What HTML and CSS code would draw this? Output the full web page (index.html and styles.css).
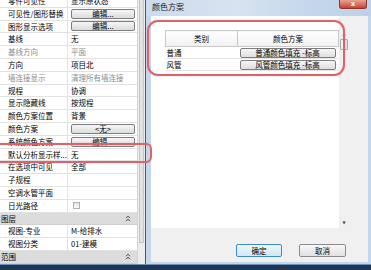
FILE: index.html
```html
<!DOCTYPE html>
<html lang="zh-CN">
<head>
<meta charset="UTF-8" />
<meta name="viewport" content="width=device-width, initial-scale=1" />
<title>颜色方案</title>
<link rel="stylesheet" href="styles.css">
</head>
<body>

<div class="screen">
  <div class="props">
    <div class="grid">
      <div class="row"><span class="key">零件可见性</span><span class="val">显示原状态</span></div>
      <div class="row"><span class="key">可见性/图形替换</span><span class="val"><span class="ebtn">编辑...</span></span></div>
      <div class="row"><span class="key">图形显示选项</span><span class="val"><span class="ebtn">编辑...</span></span></div>
      <div class="row"><span class="key">基线</span><span class="val">无</span></div>
      <div class="row off"><span class="key">基线方向</span><span class="val">平面</span></div>
      <div class="row"><span class="key">方向</span><span class="val">项目北</span></div>
      <div class="row off"><span class="key">墙连接显示</span><span class="val">清理所有墙连接</span></div>
      <div class="row"><span class="key">规程</span><span class="val">协调</span></div>
      <div class="row"><span class="key">显示隐藏线</span><span class="val">按规程</span></div>
      <div class="row"><span class="key">颜色方案位置</span><span class="val">背景</span></div>
      <div class="row"><span class="key">颜色方案</span><span class="val"><span class="ebtn">&lt;无&gt;</span></span></div>
      <div class="row"><span class="key">系统颜色方案</span><span class="val"><span class="ebtn">编辑...</span></span></div>
      <div class="row"><span class="key">默认分析显示样...</span><span class="val">无</span></div>
      <div class="row"><span class="key">在选项中可见</span><span class="val">全部</span></div>
      <div class="row"><span class="key">子规程</span><span class="val"></span></div>
      <div class="row"><span class="key">空调水管平面</span><span class="val"></span></div>
      <div class="row"><span class="key">日光路径</span><span class="val"><span class="chk"></span></span></div>
      <div class="row group"><span>图层</span>
        <svg class="fold" width="6" height="7" viewBox="0 0 6 7"><path d="M1 3.2 L3 1.2 L5 3.2 M1 6.2 L3 4.2 L5 6.2" fill="none" stroke="#444" stroke-width="1"/></svg>
      </div>
      <div class="row"><span class="key">视图-专业</span><span class="val">M-给排水</span></div>
      <div class="row"><span class="key">视图分类</span><span class="val">01-建模</span></div>
      <div class="row group"><span>范围</span>
        <svg class="fold" width="6" height="7" viewBox="0 0 6 7"><path d="M1 3.2 L3 1.2 L5 3.2 M1 6.2 L3 4.2 L5 6.2" fill="none" stroke="#444" stroke-width="1"/></svg>
      </div>
    </div>
    <div class="vscroll"><div class="thumb"></div></div>
  </div>

  <div class="dialog">
    <div class="titlebar">
      <span class="title">颜色方案</span>
      <span class="close">x</span>
    </div>
    <div class="client">
      <div class="listarea">
        <div class="list">
          <table class="schemes">
            <tr><th class="c1">类别</th><th class="c2">颜色方案</th></tr>
            <tr><td class="c1">普通</td><td class="c2"><span class="sbtn">普通颜色填充 -标高</span></td></tr>
            <tr><td class="c1">风管</td><td class="c2"><span class="sbtn">风管颜色填充 -标高</span></td></tr>
          </table>
        </div>
        <div class="lscroll">
          <span class="arrow">▲</span>
          <span class="lthumb"></span>
          <span class="spacer"></span>
          <span class="arrow">▼</span>
        </div>
      </div>
      <div class="actions">
        <span class="btn default">确定</span>
        <span class="btn">取消</span>
      </div>
    </div>
  </div>

  <div class="mark mark-table"></div>
  <div class="mark mark-row"></div>
</div>
<div class="taskbar"></div>

</body>
</html>
```

FILE: styles.css
```css
* {
  box-sizing: border-box;
}
body {
  margin: 0;
  width: 371px;
  height: 270px;
  overflow: hidden;
  background: #22395a;
  font-family: "Noto Sans CJK SC", "Noto Sans", sans-serif;
  font-size: 7.5px;
  color: #000;
}
.screen {
  position: relative;
  display: flex;
  width: 371px;
  height: 264px;
  overflow: hidden;
}

/* properties palette */
.props {
  display: flex;
  width: 146px;
  height: 264px;
  background: #fff;
  border-right: 1px solid #4b5868;
  overflow: hidden;
}
.grid {
  width: 137px;
  margin-top: -5px;
}
.row {
  display: flex;
  height: 12.8px;
  border-bottom: 1px solid #e2e2e2;
  line-height: 11.8px;
  white-space: nowrap;
}
.key {
  width: 68px;
  padding-left: 8px;
  border-right: 1px solid #e2e2e2;
  overflow: hidden;
}
.val {
  flex: 1;
  display: flex;
  align-items: center;
  padding-left: 3px;
}
.off .key, .off .val {
  color: #8c8c8c;
}
.ebtn {
  flex: 1;
  height: 10px;
  margin-right: 2px;
  border: 1px solid #7d7d7d;
  border-radius: 2px;
  background: linear-gradient(#f6f6f6, #dcdcdc);
  text-align: center;
  line-height: 8px;
}
.chk {
  width: 7px;
  height: 7px;
  margin-left: 2px;
  border: 1px solid #b0b0b0;
  background: linear-gradient(#e4e4e4, #fafafa);
}
.group {
  justify-content: space-between;
  align-items: center;
  padding: 0 6px 0 1px;
  background: #dcdcdc;
  border-bottom-color: #cfcfcf;
}
.vscroll {
  width: 8px;
  padding: 0 1px;
  background: #ececec;
  border-left: 1px solid #d4d4d4;
}
.thumb {
  height: 243px;
  border: 1px solid #c6c6c6;
  border-top: none;
  background: #e2e2e2;
}

/* colour scheme dialog */
.dialog {
  flex: 1;
  display: flex;
  flex-direction: column;
  background: #c3d6eb;
}
.titlebar {
  display: flex;
  align-items: flex-start;
  height: 16px;
  padding: 0 4px 0 6px;
  background: linear-gradient(90deg, #cbdcee, #d7e3ef 40%, #c6d8ec 70%, #bcd1e8);
}
.title {
  font-size: 8px;
  line-height: 13px;
  color: #1a1a1a;
}
.close {
  margin-left: auto;
  width: 28px;
  height: 9px;
  border: 1px solid #8b3428;
  border-top: none;
  border-radius: 0 0 3px 3px;
  background: linear-gradient(#e9a294, #c9452f);
  color: #fff;
  font-family: "DejaVu Sans", sans-serif;
  font-size: 7px;
  font-weight: bold;
  text-align: center;
  line-height: 8px;
}
.client {
  flex: 1;
  margin: 0 3px 2px 5px;
  background: #f0f0f0;
}
.listarea {
  display: flex;
  height: 212px;
}
.list {
  width: 188px;
  padding: 14px 0 0 14px;
  background: #fff;
}
.schemes {
  border-collapse: collapse;
  width: 174px;
}
.schemes th {
  height: 16px;
  padding: 0;
  font-weight: normal;
  text-align: center;
  border: 1px solid #c9c9c9;
  background: linear-gradient(#fff, #f1f1f1);
}
.schemes td {
  height: 12px;
  padding: 0;
  border-bottom: 1px solid #e4e4e4;
}
.schemes .c1 {
  width: 72px;
  padding-left: 1px;
}
.schemes th.c1 {
  padding-left: 0;
}
.schemes td.c2 {
  padding: 0 3px 0 2px;
}
.sbtn {
  display: block;
  height: 10px;
  border: 1px solid #7f7f7f;
  border-radius: 2px;
  background: linear-gradient(#f7f7f7, #dddddd);
  text-align: center;
  line-height: 8px;
}
.lscroll {
  width: 10px;
  display: flex;
  flex-direction: column;
  align-items: center;
  padding: 14px 0 1px;
}
.arrow {
  height: 8px;
  font-family: "DejaVu Sans", sans-serif;
  font-size: 4px;
  line-height: 8px;
  color: #444;
}
.lthumb {
  width: 8px;
  height: 11px;
  margin-top: 1px;
  border: 1px solid #a9a9a9;
  border-radius: 1px;
  background: linear-gradient(90deg, #f4f4f4, #e0e0e0);
}
.spacer {
  flex: 1;
}
.actions {
  display: flex;
  justify-content: flex-end;
  gap: 17px;
  margin-top: 16px;
  padding-right: 22px;
}
.btn {
  width: 47px;
  height: 13px;
  border: 1px solid #8a8a8a;
  border-radius: 2px;
  background: linear-gradient(#f7f7f7, #e1e1e1);
  text-align: center;
  line-height: 11px;
}
.btn.default {
  width: 46px;
  border-color: #3d8ac6;
  background: linear-gradient(#eef6fc, #d3e7f6);
}

/* red annotation marks drawn over the screenshot */
.mark {
  position: absolute;
  border: 2px solid #e0616b;
  box-shadow: 0 0 1px rgba(224, 97, 107, 0.6);
}
.mark-table {
  left: 147px;
  top: 20px;
  width: 198px;
  height: 56px;
  border-radius: 11px;
}
.mark-row {
  left: -12px;
  top: 143px;
  width: 164px;
  height: 20px;
  border-radius: 6px;
}
.taskbar {
  height: 6px;
  border-top: 1px solid #6f8fb4;
  background: #1f3656;
}
```
